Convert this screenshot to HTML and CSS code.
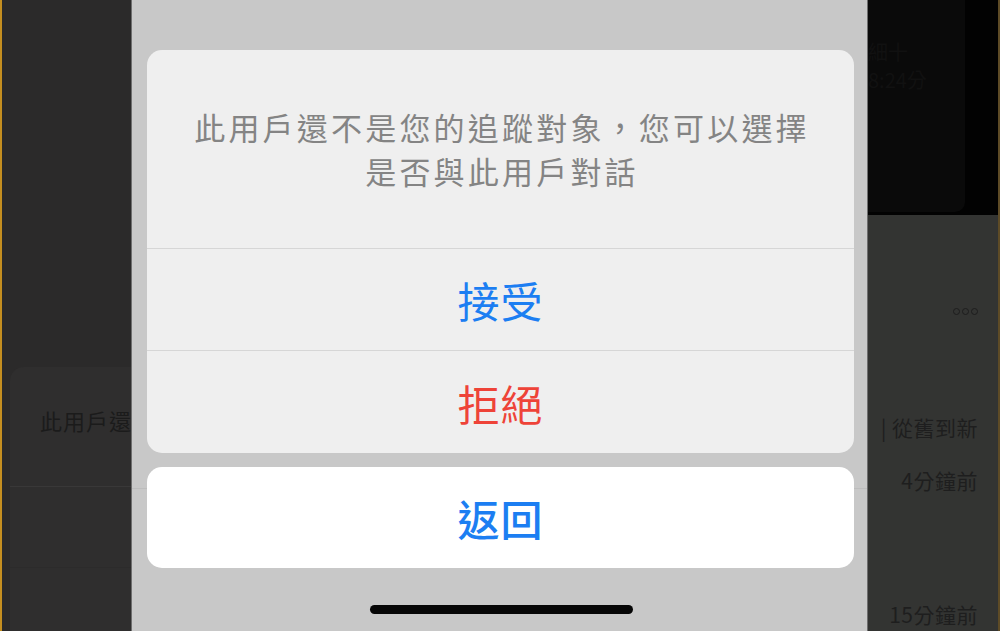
FILE: index.html
```html
<!DOCTYPE html>
<html lang="zh-Hant">
<head>
<meta charset="utf-8">
<link rel="stylesheet" href="styles.css">
</head>
<body>
<div class="screen">
  <div class="side-left">
    <div class="left-card">
      <div class="left-row">此用戶還</div>
      <div class="left-row2"></div>
    </div>
  </div>

  <div class="phone">
    <div class="ghost-line"></div>
    <div class="sheet">
      <div class="sheet-group">
        <div class="sheet-title">此用戶還不是您的追蹤對象，您可以選擇<br>是否與此用戶對話</div>
        <div class="sheet-btn blue">接受</div>
        <div class="sheet-btn red last">拒絕</div>
      </div>
      <div class="sheet-cancel">返回</div>
    </div>
    <div class="home-bar"></div>
  </div>

  <div class="side-right">
    <div class="right-top">
      <div class="right-card">
        <div class="faint">細十</div>
        <div class="faint">8:24分</div>
      </div>
    </div>
    <div class="right-bottom">
      <div class="dots"><span></span><span></span><span></span></div>
      <div class="rtext r1">| 從舊到新</div>
      <div class="rtext r2">4分鐘前</div>
      <div class="rtext r3">15分鐘前</div>
    </div>
  </div>
</div>
</body>
</html>
```

FILE: styles.css
```css
html, body {
  margin: 0;
  padding: 0;
  width: 1000px;
  height: 631px;
  overflow: hidden;
  background: #2a2929;
  font-family: "Noto Sans CJK TC", "Noto Sans CJK SC", "Noto Sans", sans-serif;
}

.screen {
  display: flex;
  width: 1000px;
  height: 631px;
}

/* left background panel */
.side-left {
  width: 131px;
  flex: none;
  box-sizing: border-box;
  border-left: 2px solid #c48e20;
  background: #2b2a2a;
  padding-top: 367px;
  padding-left: 8px;
  overflow: hidden;
}

.left-card {
  background: #2f2e2e;
  border-top-left-radius: 14px;
  height: 264px;
}

.left-row {
  height: 120px;
  box-sizing: border-box;
  padding: 38px 0 0 30px;
  font-size: 22px;
  line-height: 30px;
  letter-spacing: 1px;
  color: #1b1b1b;
  white-space: nowrap;
  border-bottom: 1px solid #393838;
}

.left-row2 {
  height: 80px;
  border-bottom: 1px solid #2c2b2b;
}

/* phone */
.phone {
  width: 737px;
  flex: none;
  background: #c8c8c8;
  box-sizing: border-box;
  border-left: 1px solid #6e6e6e;
  border-right: 1px solid #6e6e6e;
  padding: 50px 13px 0 15px;
  display: flex;
  flex-direction: column;
  position: relative;
}

.ghost-line {
  position: absolute;
  left: 0;
  right: 0;
  top: 488px;
  height: 1px;
  background: #bdbdbd;
}

.sheet {
  display: flex;
  flex-direction: column;
  gap: 14px;
  position: relative;
}

.sheet-group {
  background: #efefef;
  border-radius: 15px;
  overflow: hidden;
  display: flex;
  flex-direction: column;
}

.sheet-title {
  height: 199px;
  box-sizing: border-box;
  border-bottom: 1px solid #d6d6d6;
  display: flex;
  align-items: center;
  justify-content: center;
  text-align: center;
  font-size: 31px;
  line-height: 44px;
  letter-spacing: 3.2px;
  padding-left: 3px;
  padding-bottom: 1px;
  color: #848484;
}

.sheet-btn {
  height: 102px;
  box-sizing: border-box;
  border-bottom: 1px solid #d6d6d6;
  display: flex;
  align-items: center;
  justify-content: center;
  font-size: 42px;
  letter-spacing: 1px;
}

.sheet-btn.last {
  border-bottom: none;
}

.blue {
  color: #1c7ef2;
}

.red {
  color: #ee4338;
}

.sheet-cancel {
  height: 101px;
  background: #ffffff;
  border-radius: 15px;
  display: flex;
  align-items: center;
  justify-content: center;
  font-size: 42px;
  font-weight: 500;
  letter-spacing: 1px;
  color: #1c7ef2;
}

.home-bar {
  width: 263px;
  height: 9px;
  border-radius: 5px;
  background: #060606;
  margin: 37px auto 0;
  position: relative;
  left: 1px;
}

/* right background panel */
.side-right {
  width: 132px;
  flex: none;
  display: flex;
  flex-direction: column;
  box-sizing: border-box;
  border-right: 2px solid #5e4b26;
}

.right-top {
  height: 215px;
  flex: none;
  background: #020202;
}

.right-card {
  width: 97px;
  height: 212px;
  background: #0a0a0a;
  border-bottom-right-radius: 10px;
  padding-top: 38px;
  box-sizing: border-box;
}

.faint {
  color: #111111;
  font-size: 20px;
  line-height: 28px;
  white-space: nowrap;
}

.right-bottom {
  flex: 1;
  background: #333432;
  display: flex;
  flex-direction: column;
  align-items: flex-end;
  padding-right: 20px;
}

.dots {
  display: flex;
  gap: 2px;
  margin-top: 93px;
  height: 8px;
}

.dots span {
  width: 5px;
  height: 5px;
  border: 1.5px solid #1d1d1d;
  border-radius: 50%;
}

.rtext {
  color: #1e1e1e;
  font-size: 21px;
  line-height: 30px;
  white-space: nowrap;
  letter-spacing: 0.5px;
}

.r1 {
  margin-top: 96px;
}

.r2 {
  margin-top: 23px;
}

.r3 {
  margin-top: 107px;
  line-height: 24px;
}
```
